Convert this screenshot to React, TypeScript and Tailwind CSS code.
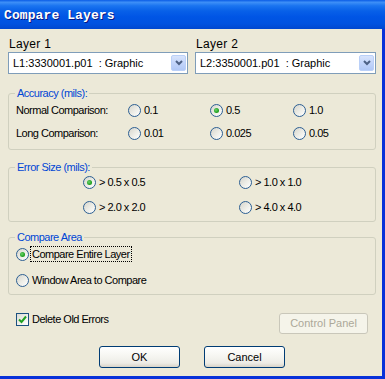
import React from "react";

const Radio = ({ checked }: { checked?: boolean }) => (
  <span className="flex h-[13px] w-[13px] shrink-0 items-center justify-center rounded-full border border-[#2C5F93] bg-[linear-gradient(135deg,#D6D5CC_0%,#EEEEE8_55%,#FFFFFF_100%)]">
    {checked && (
      <span className="h-[5px] w-[5px] rounded-full bg-[radial-gradient(circle_at_40%_40%,#6CD46C_0%,#21A121_60%,#1A8A1A_100%)]" />
    )}
  </span>
);

const RadioOption = ({
  label,
  checked,
  gap = "gap-[3px]",
}: {
  label: string;
  checked?: boolean;
  gap?: string;
}) => (
  <div className={`flex h-[20px] items-center ${gap}`}>
    <Radio checked={checked} />
    <span className="whitespace-pre tracking-[-0.5px]">{label}</span>
  </div>
);

const LayerSelect = ({
  label,
  value,
  width,
}: {
  label: string;
  value: string;
  width: string;
}) => (
  <div className={`flex flex-col ${width}`}>
    <span className="pl-[1px] text-[12px] leading-[14px] tracking-[0.3px]">
      {label}
    </span>
    <div className="mt-[1px] flex h-[22px] items-center border border-[#7F9DB9] bg-white pl-[4px] pr-[1px]">
      <span className="flex-1 whitespace-pre text-[11px]">{value}</span>
      <span className="flex h-[16px] w-[15px] items-center justify-center rounded-[2px] border border-[#BAD0F8] bg-[linear-gradient(180deg,#D8E4FC_0%,#C3D5FA_50%,#B1C8F6_100%)]">
        <svg width="8" height="6" viewBox="0 0 8 6">
          <path d="M1 1 L4 4 L7 1" fill="none" stroke="#4D6185" strokeWidth="2" />
        </svg>
      </span>
    </div>
  </div>
);

const Group = ({
  title,
  children,
  className,
}: {
  title: string;
  children: React.ReactNode;
  className: string;
}) => (
  <fieldset
    className={`rounded-[3px] border border-[#D0D0BF] pb-[6px] ${className}`}
  >
    <legend className="ml-[6px] px-[2px] text-[11px] leading-[13px] tracking-[-0.5px] text-[#0046D5]">
      {title}
    </legend>
    {children}
  </fieldset>
);

const XpButton = ({ label }: { label: string }) => (
  <button className="flex h-[22px] w-[81px] items-center justify-center rounded-[3px] border border-[#003C74] bg-[linear-gradient(180deg,#FFFFFF_0%,#F7F7F3_40%,#EDECE6_80%,#D8D3C8_100%)] text-[11px] text-black">
    {label}
  </button>
);

export default function App() {
  return (
    <div className="h-[379px] w-[385px] overflow-hidden bg-[#0831D9] font-['Liberation_Sans',Arial,sans-serif] text-[11px] text-black">
      <div className="flex h-[29px] items-center bg-[linear-gradient(180deg,#0A5CE6_0%,#3D8FF7_8%,#1A74F0_20%,#0860E8_38%,#0055E5_58%,#0052E0_82%,#0047CF_100%)] pl-[4px] pt-[3px]">
        <span className="font-['Liberation_Mono',monospace] text-[13px] font-bold tracking-[0.1px] text-white [text-shadow:1px_1px_0_#0a1883]">
          Compare Layers
        </span>
      </div>

      <div className="flex h-[347px] w-[382px] flex-col bg-[#ECE9D8] pl-[8px] pr-[6px] pt-[8px]">
        <div className="flex gap-[7px]">
          <LayerSelect
            label="Layer 1"
            value="L1:3330001.p01  : Graphic"
            width="w-[180px]"
          />
          <LayerSelect
            label="Layer 2"
            value="L2:3350001.p01  : Graphic"
            width="w-[181px]"
          />
        </div>

        <Group title="Accuracy (mils):" className="mt-[13px]">
          <div className="grid grid-cols-[112px_82px_83px_1fr] gap-y-[3px] pl-[7px]">
            <div className="flex h-[20px] items-center tracking-[-0.5px]">
              Normal Comparison:
            </div>
            <RadioOption label="0.1" />
            <RadioOption label="0.5" checked />
            <RadioOption label="1.0" />
            <div className="flex h-[20px] items-center tracking-[-0.5px]">
              Long Comparison:
            </div>
            <RadioOption label="0.01" />
            <RadioOption label="0.025" />
            <RadioOption label="0.05" />
          </div>
        </Group>

        <Group title="Error Size (mils):" className="mt-[11px]">
          <div className="grid grid-cols-[156px_1fr] gap-y-[9px] pl-[74px] [&>div]:h-[16px]">
            <RadioOption label="> 0.5 x 0.5" checked />
            <RadioOption label="> 1.0 x 1.0" />
            <RadioOption label="> 2.0 x 2.0" />
            <RadioOption label="> 4.0 x 4.0" />
          </div>
        </Group>

        <Group title="Compare Area" className="mt-[9px]">
          <div className="flex flex-col gap-[10px] pl-[7px] pt-[2px]">
            <div className="flex h-[16px] items-center gap-[1px]">
              <Radio checked />
              <span className="flex h-[16px] items-center border border-dotted border-black px-[1px] tracking-[-0.5px]">
                Compare Entire Layer
              </span>
            </div>
            <div className="flex h-[16px] items-center gap-[3px]">
              <Radio />
              <span className="tracking-[-0.5px]">Window Area to Compare</span>
            </div>
          </div>
        </Group>

        <div className="mt-[18px] flex h-[21px] items-start justify-between pl-[8px] pr-[8px]">
          <div className="flex h-[13px] items-center gap-[3px]">
            <span className="flex h-[13px] w-[13px] items-center justify-center border border-[#1C5180] bg-[linear-gradient(135deg,#DCDCD4_0%,#F2F2EE_60%,#FFFFFF_100%)]">
              <svg width="9" height="9" viewBox="0 0 9 9">
                <path
                  d="M1 4.5 L3.5 7 L8 1.5"
                  fill="none"
                  stroke="#21A121"
                  strokeWidth="2"
                />
              </svg>
            </span>
            <span className="tracking-[-0.5px]">Delete Old Errors</span>
          </div>
          <button className="flex h-[21px] w-[89px] items-center justify-center rounded-[3px] border border-[#C9C7BA] bg-[#F5F4EA] text-[11px] text-[#ACA899]">
            Control Panel
          </button>
        </div>

        <div className="mt-[12px] flex gap-[24px] pl-[91px]">
          <XpButton label="OK" />
          <XpButton label="Cancel" />
        </div>
      </div>
    </div>
  );
}
